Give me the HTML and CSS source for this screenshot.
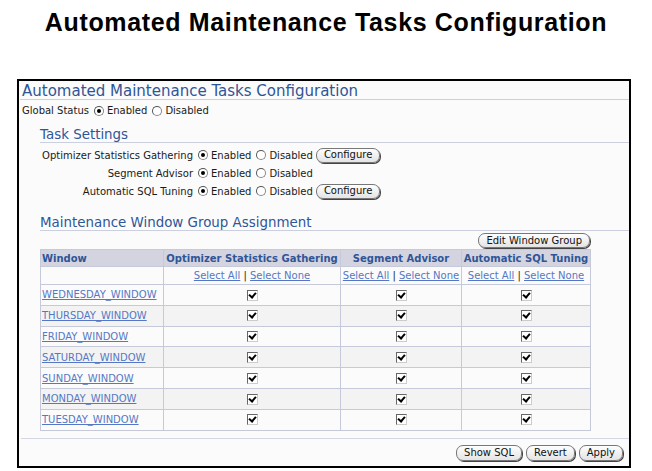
FILE: index.html
```html
<!DOCTYPE html>
<html>
<head>
<meta charset="utf-8">
<link rel="stylesheet" href="styles.css">
</head>
<body>
<h1 class="title">Automated Maintenance Tasks Configuration</h1>
<div class="frame">
  <div class="page-h">Automated Maintenance Tasks Configuration</div>
  <div class="global">
    <span>Global Status</span>
    <span class="radio on"></span><span>Enabled</span>
    <span class="radio"></span><span>Disabled</span>
  </div>
  <div class="section">
    <div class="sec-h">Task Settings</div>
    <div class="settings">
      <span class="lbl">Optimizer Statistics Gathering</span>
      <div class="opts"><span class="radio on"></span><span>Enabled</span><span class="radio"></span><span>Disabled</span><button class="btn">Configure</button></div>
      <span class="lbl">Segment Advisor</span>
      <div class="opts"><span class="radio on"></span><span>Enabled</span><span class="radio"></span><span>Disabled</span></div>
      <span class="lbl">Automatic SQL Tuning</span>
      <div class="opts"><span class="radio on"></span><span>Enabled</span><span class="radio"></span><span>Disabled</span><button class="btn">Configure</button></div>
    </div>
    <div class="sec-h sec-h2">Maintenance Window Group Assignment</div>
    <div class="grid-wrap">
      <div class="toolbar"><button class="btn">Edit Window Group</button></div>
      <table class="grid">
        <colgroup><col class="c1"><col class="c2"><col class="c3"><col class="c4"></colgroup>
        <thead>
          <tr><th class="left">Window</th><th>Optimizer Statistics Gathering</th><th>Segment Advisor</th><th>Automatic SQL Tuning</th></tr>
        </thead>
        <tbody>
          <tr class="sel"><td></td><td><a>Select All</a> | <a>Select None</a></td><td><a>Select All</a> | <a>Select None</a></td><td><a>Select All</a> | <a>Select None</a></td></tr>
          <tr><td class="left"><a>WEDNESDAY_WINDOW</a></td><td><span class="cb"></span></td><td><span class="cb"></span></td><td><span class="cb"></span></td></tr>
          <tr class="alt"><td class="left"><a>THURSDAY_WINDOW</a></td><td><span class="cb"></span></td><td><span class="cb"></span></td><td><span class="cb"></span></td></tr>
          <tr><td class="left"><a>FRIDAY_WINDOW</a></td><td><span class="cb"></span></td><td><span class="cb"></span></td><td><span class="cb"></span></td></tr>
          <tr class="alt"><td class="left"><a>SATURDAY_WINDOW</a></td><td><span class="cb"></span></td><td><span class="cb"></span></td><td><span class="cb"></span></td></tr>
          <tr><td class="left"><a>SUNDAY_WINDOW</a></td><td><span class="cb"></span></td><td><span class="cb"></span></td><td><span class="cb"></span></td></tr>
          <tr class="alt"><td class="left"><a>MONDAY_WINDOW</a></td><td><span class="cb"></span></td><td><span class="cb"></span></td><td><span class="cb"></span></td></tr>
          <tr><td class="left"><a>TUESDAY_WINDOW</a></td><td><span class="cb"></span></td><td><span class="cb"></span></td><td><span class="cb"></span></td></tr>
        </tbody>
      </table>
    </div>
  </div>
  <div class="footer">
    <button class="btn">Show SQL</button>
    <button class="btn">Revert</button>
    <button class="btn">Apply</button>
  </div>
</div>
</body>
</html>
```
FILE: styles.css
```css
html, body { margin: 0; padding: 0; background: #fff; }
body { width: 652px; height: 471px; overflow: hidden; font-family: "DejaVu Sans", sans-serif; font-size: 10px; color: #1a1a1a; }

.title {
  margin: 0;
  padding-top: 8px;
  height: 31px;
  text-align: center;
  font-family: "Liberation Sans", Arial, sans-serif;
  font-weight: bold;
  font-size: 25px;
  line-height: 28px;
  color: #000;
  letter-spacing: 0.65px;
}

.frame {
  margin: 40px 0 0 17px;
  width: 610px;
  height: 385px;
  border: 2px solid #000;
  background: #fbfbfb;
  display: flex;
  flex-direction: column;
}

.page-h {
  margin-left: 1px;
  padding-left: 2px;
  height: 18px;
  line-height: 20px;
  font-size: 15px;
  color: #2f5597;
  border-bottom: 1px solid #cbcfe0;
}

.global {
  display: flex;
  align-items: center;
  height: 21px;
  padding-left: 3px;
  gap: 3px;
}

.radio {
  display: inline-block;
  width: 8px;
  height: 8px;
  border-radius: 50%;
  border: 1px solid #888;
  border-top-color: #555;
  border-left-color: #555;
  background: #fff;
  position: relative;
  margin-left: 2px;
}
.radio.on::after {
  content: "";
  position: absolute;
  left: 2px; top: 2px;
  width: 4px; height: 4px;
  border-radius: 50%;
  background: #000;
}

.section { margin-left: 21px; }

.sec-h {
  margin-top: 4px;
  height: 17px;
  line-height: 20px;
  font-size: 13.4px;
  color: #2f5597;
  border-bottom: 1px solid #cbcfe0;
}
.sec-h2 { margin-top: 13px; }

.settings {
  display: grid;
  grid-template-columns: 153px auto;
  grid-auto-rows: 18px;
  align-items: center;
  margin-top: 3px;
  column-gap: 3px;
}
.lbl { justify-self: end; }
.opts { display: flex; align-items: center; gap: 3px; }

.btn {
  font-family: "DejaVu Sans", sans-serif;
  font-size: 10px;
  color: #111;
  height: 15px;
  line-height: 12px;
  padding: 0 7px;
  border: 1px solid #777;
  border-radius: 7px;
  background: linear-gradient(#fefefe, #e4e4e4);
  box-shadow: 1px 1px 0 #444;
  margin-left: 0;
}

.grid-wrap { width: 550px; }
.toolbar { display: flex; justify-content: flex-end; height: 18px; padding-top: 2px; box-sizing: border-box; }

.grid {
  width: 550px;
  border-collapse: collapse;
  table-layout: fixed;
}
.c1 { width: 123px; }
.c2 { width: 177px; }
.c3 { width: 121px; }
.c4 { width: 129px; }

.grid th {
  background: #d3d4df;
  color: #2f5597;
  font-weight: bold;
  font-size: 10px;
  height: 16px;
  padding: 0 1px;
  border: 1px solid #c6c9d9;
  white-space: nowrap;
}
.grid td {
  height: 19.8px;
  padding: 0 1px;
  text-align: center;
  border: 1px solid #c6c9d9;
  white-space: nowrap;
}
.grid .left { text-align: left; }
.grid tr.sel td { height: 17px; }
.grid tr.alt td { background: #f3f3f3; }
.grid a { color: #5677c4; text-decoration: underline; }

.cb {
  display: inline-block;
  width: 9px;
  height: 9px;
  border: 1px solid #ccc;
  border-top-color: #666;
  border-left-color: #666;
  background: #fff;
  position: relative;
  vertical-align: middle;
}
.cb::after {
  content: "";
  position: absolute;
  left: 2px; top: 0px;
  width: 3px; height: 5px;
  border-right: 2px solid #000;
  border-bottom: 2px solid #000;
  transform: rotate(40deg);
}

.footer {
  margin: 7px 0 0 2px;
  border-top: 1px solid #d5d8e4;
  display: flex;
  justify-content: flex-end;
  gap: 4px;
  padding: 6px 6px 0 0;
}
.footer .btn { height: 16px; }
```
